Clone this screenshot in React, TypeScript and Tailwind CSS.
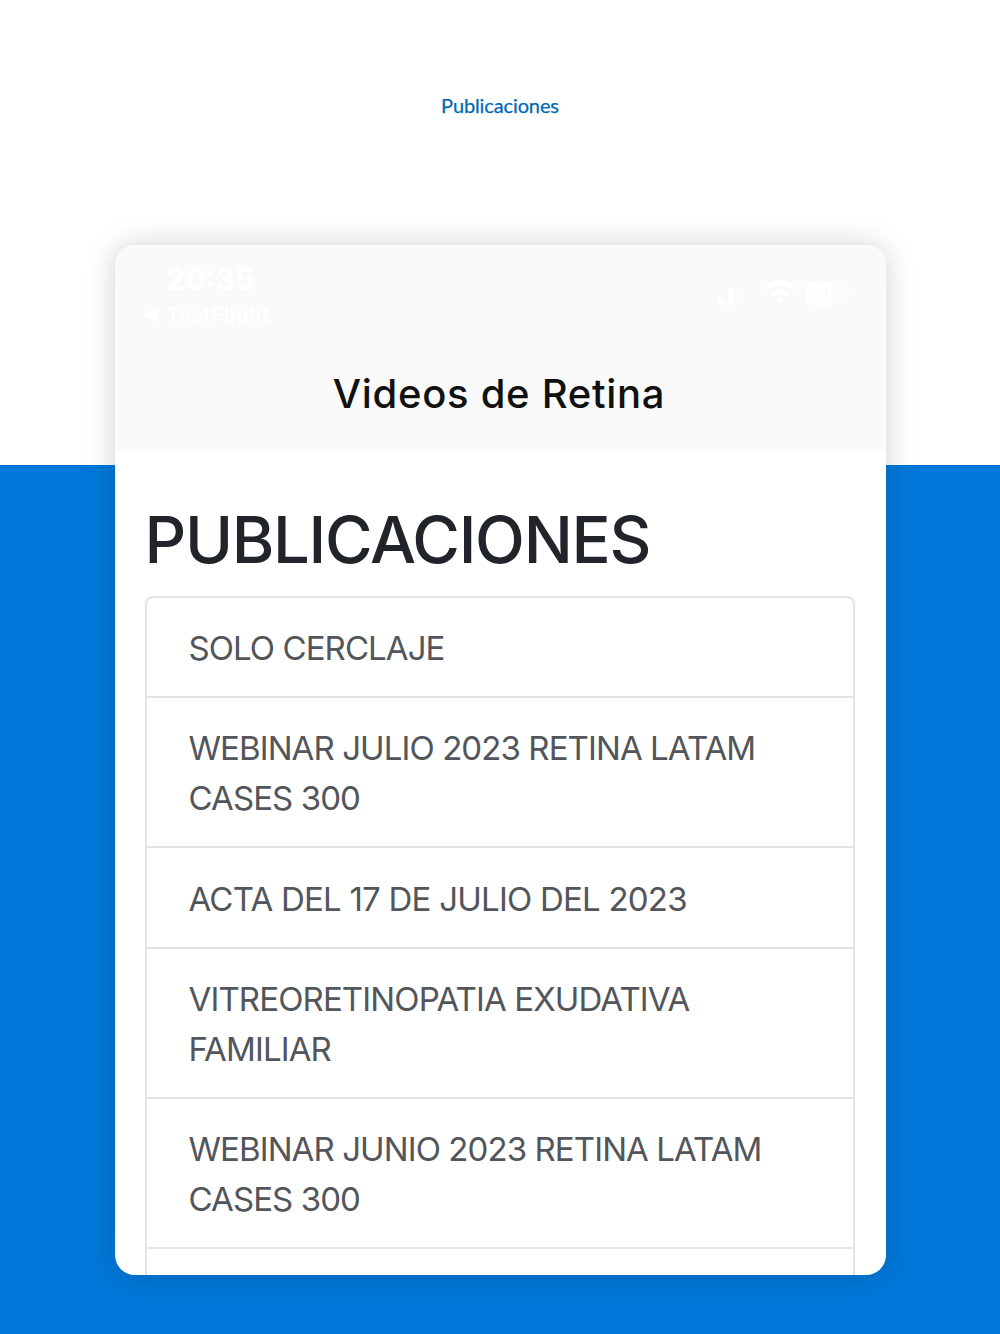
const rows = [
  { lines: ["SOLO CERCLAJE"], tracking: "tracking-[-0.93px]" },
  { lines: ["WEBINAR JULIO 2023 RETINA LATAM", "CASES 300"], tracking: "tracking-[-0.91px]" },
  { lines: ["ACTA DEL 17 DE JULIO DEL 2023"], tracking: "tracking-[-0.77px]" },
  { lines: ["VITREORETINOPATIA EXUDATIVA", "FAMILIAR"], tracking: "tracking-[-0.87px]" },
  { lines: ["WEBINAR JUNIO 2023 RETINA LATAM", "CASES 300"], tracking: "tracking-[-0.91px]" },
];

function StatusIcons() {
  return (
    <svg className="mt-[17px] blur-[0.7px]" width="134" height="32" viewBox="0 0 134 32" fill="currentColor">
      <rect x="0" y="19" width="6" height="7" rx="2" />
      <rect x="10" y="10" width="6" height="16" rx="2" />
      <rect x="19" y="7" width="5" height="19" rx="2" opacity=".25" />
      <rect x="27" y="3" width="5" height="23" rx="2" opacity=".15" />
      <g fill="none" stroke="currentColor" strokeWidth="4.5" strokeLinecap="round">
        <path d="M50 8Q62-1 74 8" />
        <path d="M55 15Q62 10 69 15" />
      </g>
      <path d="M58 20Q62 17 66 20L62 25Z" />
      <rect x="88" y="3" width="44" height="23" rx="7" opacity=".3" />
      <path fillRule="evenodd" d="M95 3H113V26H95Q88 26 88 19V10Q88 3 95 3ZM96 9V11H100L95 20H102V18H99L103 9ZM106 9L103 17H108V20H110V9Z" />
    </svg>
  );
}

export default function App() {
  return (
    <main className="h-[1334px] w-[1000px] overflow-hidden bg-[linear-gradient(to_bottom,#ffffff_465px,#0078d9_465px)] font-['Inter',sans-serif]">
      <header className="flex h-[245px] justify-center pt-[91px]">
        <h1 className="h-7 font-['Lato',sans-serif] text-[20px] font-normal leading-7 tracking-[-0.12px] text-[#0069b4] [-webkit-text-stroke:0.25px_#0069b4]">Publicaciones</h1>
      </header>
      <section className="mx-auto h-[1030px] w-[771px] overflow-hidden rounded-[20px] bg-white shadow-[0_0_30px_rgba(0,0,0,0.18)]">
        <div className="h-[206px] bg-[#fafafa]">
          <div className="flex h-[110px] justify-between pl-[28px] pr-[34px] pt-[17px] text-white">
            <div>
              <div className="pl-[24px] text-[30px] font-bold leading-[34px] blur-[0.5px]">20:35</div>
              <div className="flex items-center gap-[10px] text-[20px] font-semibold leading-[38px] tracking-[0.8px] blur-[0.6px]">
                <svg width="14" height="14" viewBox="0 0 14 14" fill="currentColor"><path d="M14 0V14L0 7Z" /></svg>
                <span>TestFlight</span>
              </div>
            </div>
            <StatusIcons />
          </div>
          <h2 className="pr-[2px] text-center text-[40px] font-medium leading-[78px] tracking-[0.7px] text-[#111]">Videos de Retina</h2>
        </div>
        <div className="pl-[30px] pr-[31px] pt-[51px]">
          <h2 className="h-[94px] text-[65px] font-medium leading-[76px] tracking-[-1.3px] text-[#212529]">PUBLICACIONES</h2>
          <div className="h-[720px] rounded-t-[8px] border-2 border-[#e4e4e5]">
            {rows.map(({ lines, tracking }, i) => (
              <div key={i} className={`border-b-2 border-[#e4e4e5] px-[42px] pb-[22.6px] pt-[26.1px] text-[33px] leading-[49.7px] text-[#52565b] ${tracking}`}>
                {lines.map((line) => (
                  <p key={line} className="whitespace-nowrap">{line}</p>
                ))}
              </div>
            ))}
          </div>
        </div>
      </section>
    </main>
  );
}
